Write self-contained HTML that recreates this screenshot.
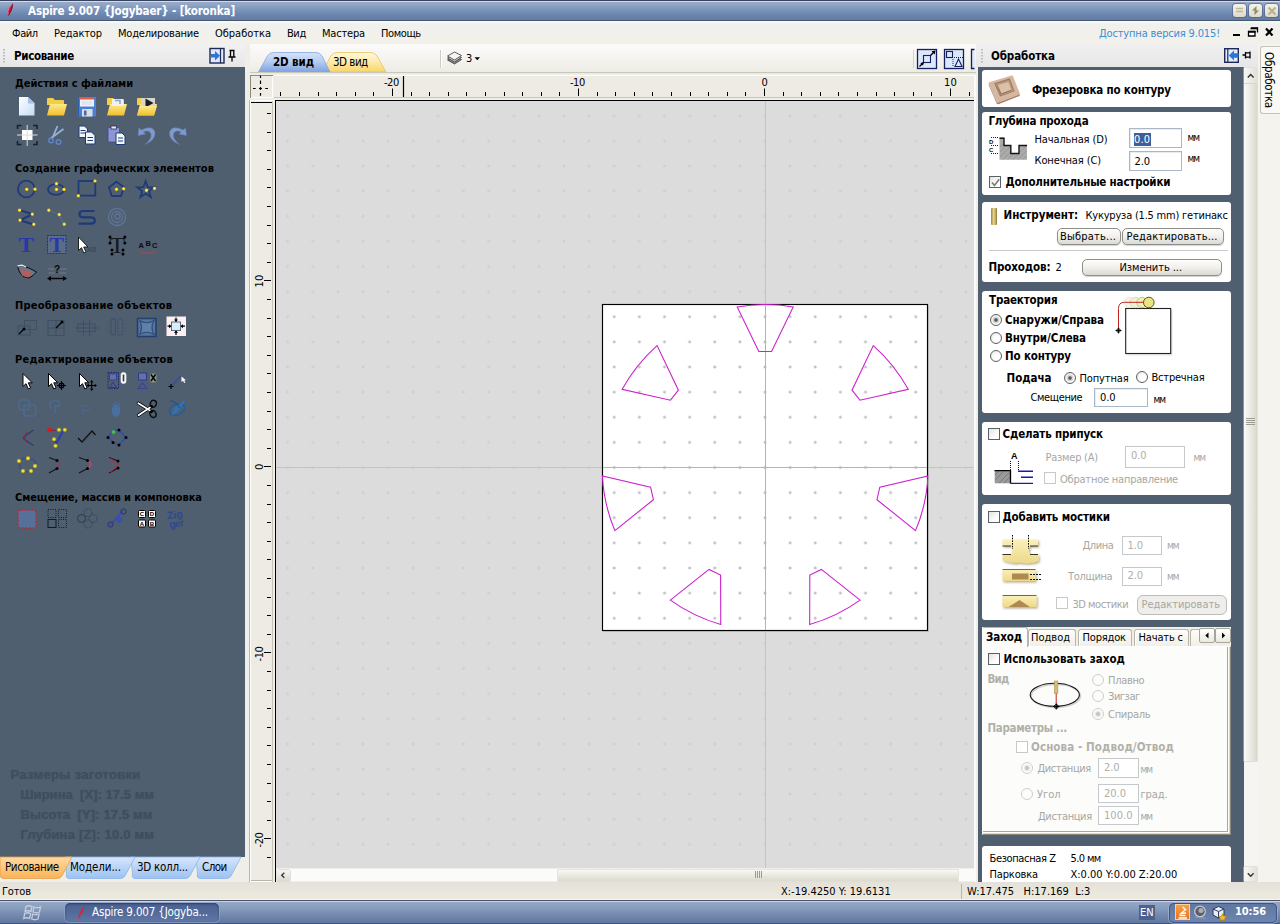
<!DOCTYPE html>
<html lang="ru"><head><meta charset="utf-8"><title>Aspire 9.007 {Jogybaer} - [koronka]</title>
<style>
html,body{margin:0;padding:0;background:#ece9d8;}
body{width:1280px;height:924px;overflow:hidden;font-family:"DejaVu Sans Condensed","Liberation Sans",sans-serif;font-size:11px;color:#000;}
#scr{position:relative;width:1280px;height:924px;overflow:hidden;background:#efeee8;}
.a{position:absolute;}
.t{position:absolute;white-space:nowrap;line-height:14px;height:14px;}
.b{font-weight:bold;}
svg{position:absolute;overflow:visible;}
/* title */
#title{left:0;top:0;width:1280px;height:21px;background:linear-gradient(#36425e 0,#36425e 1px,#ccdcf8 1px,#ccdcf8 2px,#9aaac8 2px,#90a4c5 5px,#7a94ba 10px,#6a84b0 15px,#667fa8 18px,#677b9c 20px,#46566c 20px,#46566c 21px);}
#title .t{color:#fff;font-size:12px;font-weight:bold;}
.tb{position:absolute;top:4px;width:13px;height:13px;border-radius:3px;background:linear-gradient(#f4f2ea,#dedacb);box-shadow:0 0 0 1px rgba(70,90,130,.55);}
/* menu */
#menu{left:0;top:21px;width:1280px;height:23px;background:linear-gradient(#f7fbfd 0,#f5f8fa 1px,#f0f1ee 3px,#f3f0e9 100%);}
/* left panel */
#lhead{left:0;top:44px;width:245px;height:23px;background:linear-gradient(#f2f2f2,#e6e6e6);}
#lbody{left:0;top:67px;width:245px;height:790px;background:#4f5f6f;}
#lbody .h{font-weight:bold;color:#000;font-size:11px;}
.emb{color:#3f4d5d;font-weight:bold;font-size:13px;font-family:"Liberation Sans",sans-serif;text-shadow:0 0 1px rgba(63,77,93,.6);}
/* status + taskbar */
#status{left:0;top:882px;width:1280px;height:18px;background:linear-gradient(#e3e1d9,#ebe8de 70%,#ebe8de 94%,#f6f6f8 95%);}
#task{left:0;top:900px;width:1280px;height:24px;background:linear-gradient(#4a5068 0,#4a5068 1px,#c8d4f0 1px,#c8d4f0 1.500px,#96a6c6 2px,#89a1bd 7px,#7d91b7 12px,#6e82a8 18px,#61789f 23px,#3f5482 23px,#3f5482 24px);}
/* right panel */
#rhead{left:976px;top:44px;width:282px;height:23px;background:linear-gradient(#f0f0f0,#e7e7e7);}
#rbody{left:978px;top:67px;width:266px;height:815px;background:#4f5f6f;overflow:hidden;}
.bx{position:absolute;left:4px;width:249px;background:#fff;border-radius:3px;}
.in{position:absolute;box-sizing:border-box;background:#fff;border:1px solid #a9b7c6;box-shadow:inset 1px 1px 0 #e8ecf0;}
.in span{position:absolute;left:5px;top:3px;font-size:11px;line-height:14px;white-space:nowrap;}
.btn{position:absolute;box-sizing:border-box;border:1px solid #8e8f8a;border-radius:5px;background:linear-gradient(#fdfdfc,#f1f0ec 50%,#dcdad2);box-shadow:0 1px 1px rgba(0,0,0,.18);}
.btn.dis{border-color:#c4c3bd;background:#efeee9;box-shadow:none;}
.cb{position:absolute;width:12px;height:12px;box-sizing:border-box;border:1px solid #5a6068;background:linear-gradient(135deg,#e4e3dc,#fff 70%);}
.cb.dis{border-color:#c9c9c4;background:#fff;}
.rd{position:absolute;width:12px;height:12px;box-sizing:border-box;border:1px solid #5e6064;border-radius:50%;background:radial-gradient(circle at 60% 60%,#fff 30%,#e2e1da);}
.rd.on::after{content:"";position:absolute;left:3px;top:3px;width:4px;height:4px;border-radius:50%;background:radial-gradient(#4a4a4a,#8a8a8a);box-shadow:0 0 0 1.500px #d8d8d4;}
.rd.dis{border-color:#cfcfca;background:#fdfdfc;}
.rd.dis.on::after{background:#c4c4c0;box-shadow:0 0 0 1.500px #ecece8;}
.g{color:#a7a7a2;}
.gb{color:#b1b1a9;font-weight:bold;}
.in.dis{border-color:#c6c9cc;box-shadow:none;}
.in.dis span{color:#aeaeaa;}

</style></head>
<body>
<div id="scr">
<!-- title bar -->
<div class="a" id="title">
<svg style="left:0;top:0" width="20" height="20" viewBox="0 0 20 20"><path d="M8.300 16Q6 11.200 9.300 7Q11.500 4.500 12.900 2.800Q13.400 7 11.600 10.800Q10.200 13.600 8.300 16Z" fill="#b41e3c"></path><path d="M8.100 14.500Q6.800 11 9.500 7.300Q11 5.300 12.300 3.800" stroke="#e88aa4" stroke-width="1" fill="none"></path><path d="M12.600 4.500Q12.400 9 8.600 15.200" stroke="#6a1428" stroke-width=".8" fill="none"></path></svg>
<span class="t" style="left: 28px; top: 4px; font-size: 11.5px; letter-spacing: -0.13px;">Aspire 9.007 {Jogybaer} - [koronka]</span>
<div class="tb" style="left:1233px"><svg style="left:3px;top:4px" width="7" height="5"><path d="M0 .5H7M0 3.5H7" stroke="#c2b98e" stroke-width="1.6"></path></svg></div>
<div class="tb" style="left:1249px"><svg style="left:2px;top:2px" width="9" height="9"><path d="M5.5 0L5.5 4.5L1 4.5ZM3.5 9L3.5 4.5L8 4.5Z" fill="#8f8a68"></path></svg></div>
<div class="tb" style="left:1265px"><svg style="left:2.5px;top:2.5px" width="8" height="8"><path d="M.5 .5L7.5 7.5M7.5 .5L.5 7.5" stroke="#b9b18c" stroke-width="2"></path></svg></div>
</div>
<!-- menu bar -->
<div class="a" id="menu">
<span class="t" style="left: 12px; top: 6px; letter-spacing: -0.38px;">Файл</span>
<span class="t" style="left: 54px; top: 6px; letter-spacing: -0.14px;">Редактор</span>
<span class="t" style="left: 118px; top: 6px; letter-spacing: -0.2px;">Моделирование</span>
<span class="t" style="left: 215px; top: 6px; letter-spacing: -0.02px;">Обработка</span>
<span class="t" style="left: 287px; top: 6px; letter-spacing: -0.42px;">Вид</span>
<span class="t" style="left: 322px; top: 6px; letter-spacing: -0.19px;">Мастера</span>
<span class="t" style="left: 381px; top: 6px; letter-spacing: -0.4px;">Помощь</span>
<span class="t" style="left: 1099px; top: 6px; color: rgb(60, 143, 210); letter-spacing: -0.16px;">Доступна версия 9.015!</span>
<svg style="left:1233px;top:6px" width="42" height="14"><path d="M0 8H7" stroke="#000" stroke-width="2"></path><path d="M18 1H24.500V5.500" stroke="#000" stroke-width="1.300" fill="none"></path><path d="M17.500 1.500H25" stroke="#000" stroke-width="1.600"></path><path d="M15.500 4.500H22V9H15.500Z" stroke="#000" stroke-width="1.300" fill="#fff"></path><path d="M15 4.800H22.500" stroke="#000" stroke-width="1.800"></path><path d="M33 1.500L39.500 8.500M39.500 1.500L33 8.500" stroke="#000" stroke-width="2.200"></path></svg>
</div>
<!-- left panel header -->
<div class="a" id="lhead">
<svg style="left:3px;top:4px" width="4" height="16"><path d="M1 1V15" stroke="#b9b9b9" stroke-width="2" stroke-dasharray="1.5 1.5"></path></svg>
<span class="t b" style="left: 14px; top: 5px; font-size: 11.5px; letter-spacing: -0.35px;">Рисование</span>
<svg style="left:209px;top:4px" width="30" height="16"><rect x="1" y=".5" width="14" height="14.5" fill="#dfe9f8" stroke="#1c2a55" stroke-width="1.4"></rect><path d="M11.5 1V15" stroke="#1c2a55" stroke-width="1.2"></path><path d="M2 6H6V3L11 7.7L6 12.5V9.5H2Z" fill="#2f74d6"></path><path d="M20.5 2.5H25.5M21.5 2.5V9M24.8 2.5V9M19.5 9H26.5M23 9V13.5" stroke="#000" stroke-width="1.3" fill="none"></path></svg>
</div>
<!-- left panel body -->
<div class="a" id="lbody">
<span class="t h" style="left: 15px; top: 9.5px; letter-spacing: -0.04px;">Действия с файлами</span>
<span class="t h" style="left: 15px; top: 94.5px; letter-spacing: 0.06px;">Создание графических элементов</span>
<span class="t h" style="left: 15px; top: 232px; letter-spacing: 0.21px;">Преобразование объектов</span>
<span class="t h" style="left: 15px; top: 286px; letter-spacing: 0.26px;">Редактирование объектов</span>
<span class="t h" style="left: 15px; top: 424px; letter-spacing: -0.09px;">Смещение, массив и компоновка</span>
<span class="t emb" style="left: 10.5px; top: 700.5px; letter-spacing: 0.33px;">Размеры заготовки</span>
<span class="t emb" style="left: 20.5px; top: 720.5px; letter-spacing: 0.04px;">Ширина&nbsp; [X]: 17.5 мм</span>
<span class="t emb" style="left: 20.5px; top: 740.5px; letter-spacing: 0.12px;">Высота&nbsp; [Y]: 17.5 мм</span>
<span class="t emb" style="left: 20.5px; top: 760.5px; letter-spacing: 0.21px;">Глубина [Z]: 10.0 мм</span>
</div>
<!-- left bottom tabs -->
<div class="a" id="ltabs" style="left:0;top:857px;width:245px;height:25px;background:#efeee8">
<svg style="left:0;top:0" width="245" height="22">
<defs><linearGradient id="gOr" x1="0" y1="0" x2="0" y2="1"><stop offset="0" stop-color="#ffd9a0"></stop><stop offset="1" stop-color="#f9b45a"></stop></linearGradient>
<linearGradient id="gBl" x1="0" y1="0" x2="0" y2="1"><stop offset="0" stop-color="#d6e6fc"></stop><stop offset="1" stop-color="#9cc2f2"></stop></linearGradient></defs>
<path d="M196 0H241L231 19Q229.500 21.500 226 21.500H201Q196 21.500 197.500 17Z" fill="url(#gBl)" stroke="#8eb4e6" stroke-width=".8"></path>
<path d="M131 0H200L190 19Q188.500 21.500 185 21.500H136Q131 21.500 132.500 17Z" fill="url(#gBl)" stroke="#8eb4e6" stroke-width=".8"></path>
<path d="M65 0H135L125 19Q123.500 21.500 120 21.500H70Q65 21.500 66.500 17Z" fill="url(#gBl)" stroke="#8eb4e6" stroke-width=".8"></path>
<path d="M0 0H72L62 19Q60.500 21.500 57 21.500H4Q0 21.500 0 18Z" fill="url(#gOr)" stroke="#e8a04a" stroke-width=".8"></path>
</svg>
<span class="t" style="left: 5px; top: 3px; font-size: 11.5px; letter-spacing: -0.39px;">Рисование</span>
<span class="t" style="left: 70px; top: 3px; font-size: 11.5px; letter-spacing: -0.12px;">Модели...</span>
<span class="t" style="left: 137px; top: 3px; font-size: 11.5px; letter-spacing: -0.26px;">3D колл...</span>
<span class="t" style="left: 202px; top: 3px; font-size: 11.5px; letter-spacing: -0.54px;">Слои</span>
</div>
<!-- status bar -->
<div class="a" id="status">
<span class="t" style="left: 2px; top: 3px; letter-spacing: -0.17px;">Готов</span>
<span class="t" style="left: 781px; top: 3px;">X:-19.4250 Y: 19.6131</span>
<div class="a" style="left:961px;top:2px;width:1px;height:15px;background:#b9b6a8"></div>
<span class="t" style="left: 967px; top: 3px; white-space: pre;">W:17.475   H:17.169  L:3</span>
</div>
<!-- left panel icons: file actions -->
<svg style="left:0;top:0" width="245" height="300" viewBox="0 0 245 300">
<defs>
<linearGradient id="gDoc" x1="0" y1="0" x2="1" y2="1"><stop offset="0" stop-color="#ffffff"></stop><stop offset="1" stop-color="#c4dcf8"></stop></linearGradient>
<linearGradient id="gFo" x1="0" y1="0" x2="0" y2="1"><stop offset="0" stop-color="#ffe98a"></stop><stop offset="1" stop-color="#f0c02c"></stop></linearGradient>
<radialGradient id="gYd"><stop offset="0" stop-color="#fff8b0"></stop><stop offset=".55" stop-color="#f4d21e"></stop><stop offset="1" stop-color="#a88a20" stop-opacity=".3"></stop></radialGradient>
<g id="fold"><path d="M0 2Q0 1 1 1H6L8 3H16Q17 3 17 4V8H0Z" fill="#f1cf4a"></path><path d="M0 18.500L3 7H20L17 18.500Z" fill="url(#gFo)"></path></g>
<circle id="yd" r="2.100" fill="url(#gYd)"></circle>
</defs>
<!-- new -->
<path d="M19 97H28L34.500 103V115.500H19Z" fill="url(#gDoc)"></path><path d="M28 97V103.500H34.500Z" fill="#9fc0ea"></path>
<!-- open -->
<use href="#fold" x="47" y="97"></use>
<!-- save -->
<rect x="77.500" y="97" width="18.500" height="19.500" fill="#4c80d2"></rect><rect x="77.500" y="97" width="1.500" height="19.500" fill="#2f5cae"></rect><rect x="80" y="97" width="14" height="9.500" fill="#f1f4fa"></rect><rect x="80" y="97" width="14" height="2.500" fill="#e2594a"></rect><path d="M81.500 102H92.500M81.500 104H92.500" stroke="#c9d2e4" stroke-width=".8"></path><rect x="82" y="109" width="10.500" height="7.500" fill="#d9dee8"></rect><rect x="84" y="110.500" width="2.500" height="5" fill="#4a68a8"></rect>
<!-- open special -->
<use href="#fold" x="107" y="97"></use><rect x="112" y="99" width="11.500" height="7" fill="#f2f1ea"></rect><path d="M115 100.500H120V104" stroke="#8aa2d2" stroke-width="1.500" fill="none"></path>
<use href="#fold" x="137" y="97"></use><rect x="141" y="98" width="14" height="8" fill="#d8d6c8"></rect><path d="M145.500 98.500L153.500 103L145.500 107.500Z" fill="#1c1c28"></path><path d="M137 115.500L140 106H157L154 115.500Z" fill="url(#gFo)"></path>
<!-- zoom extents -->
<rect x="22" y="130" width="10.500" height="10" fill="#fff"></rect><path d="M17 135H37.500M27.200 125V146" stroke="#dcdcdc" stroke-width="1"></path><path d="M17.500 129V125.500H21.500M33 125.500H37V129M37 141V144.500H33M21.500 144.500H17.500V141" stroke="#18222c" stroke-width="1.600" fill="none"></path>
<!-- cut -->
<path d="M57.500 126L52 139M63.500 129L50.500 138.500" stroke="#98b0dc" stroke-width="1.800"></path><circle cx="51" cy="140.500" r="2.300" fill="none" stroke="#5f84c8" stroke-width="1.400"></circle><circle cx="58.500" cy="142" r="2.300" fill="none" stroke="#5f84c8" stroke-width="1.400"></circle>
<!-- copy -->
<path d="M79 126H84.500L87.500 129V137.500H79Z" fill="#eef5ff" stroke="#1f3c72" stroke-width="1"></path><path d="M80.500 130.500H85.500M80.500 133H85.500" stroke="#1f3c72" stroke-width="1"></path><path d="M85.500 132H91.500L95 135.500V144H85.500Z" fill="#eef5ff" stroke="#1f3c72" stroke-width="1"></path><path d="M87.500 137.500H93M87.500 140.500H93" stroke="#1f3c72" stroke-width="1.200"></path>
<!-- paste -->
<rect x="108" y="127.500" width="11.500" height="14.500" rx="1" fill="#8d95d2" stroke="#3c4690" stroke-width=".8"></rect><rect x="111" y="126" width="5.500" height="3" fill="#e4e6f2" stroke="#2a2f60" stroke-width=".8"></rect><path d="M116 133H122L125 136V144.500H116Z" fill="#f4f8ff" stroke="#1f3c72" stroke-width="1"></path><path d="M118 138H123M118 141H123" stroke="#1f3c72" stroke-width="1.200"></path>
<!-- undo / redo -->
<path d="M139 128L138 135.500L145.500 134L143.300 132Q149 129 151 134Q152 139 145 144.500Q156 140 155 132Q152.500 124.500 141.300 130Z" fill="#7f9bcb" stroke="#5f7eb4" stroke-width=".6"></path>
<path d="M185.500 128L186.500 135.500L179 134L181.200 132Q175.500 129 173.500 134Q172.500 139 179.500 144.500Q168.500 140 169.500 132Q172 124.500 183.200 130Z" fill="#7f9bcb" stroke="#5f7eb4" stroke-width=".6"></path>
<!-- create: circle, ellipse, rect, polygon, star -->
<g fill="none" stroke="#1f3a7a" stroke-width="1.800">
<circle cx="26.300" cy="189" r="8.300"></circle><ellipse cx="56" cy="189.500" rx="8" ry="5.400"></ellipse><rect x="78.500" y="181" width="16.800" height="14.600"></rect>
<path d="M116.500 181.700L124 187.300L121 196H111.800L109 187.300Z"></path><path d="M145.6 181.2L147.7 187.1L154.0 187.3L149.0 191.1L150.8 197.1L145.6 193.6L140.4 197.1L142.2 191.1L137.2 187.3L143.5 187.1Z"></path>
<path d="M19.500 210L32.500 214.200L20 220.200L33.800 224.500" stroke-width="2.200"></path><path d="M94.500 211H83Q79.500 211 79.500 214Q79.500 217.300 83 217.300H91Q94.800 217.300 94.800 220.500Q94.800 223.700 91 223.700H78.500" stroke-width="2.200"></path>
</g>
<path d="M48.800 210L59 214.600L64 224" stroke="#5b6d8a" stroke-width="1" fill="none"></path>
<g fill="none" stroke="#5d7596" stroke-width="1.300"><circle cx="117" cy="217" r="8.500"></circle><circle cx="117" cy="217" r="5.500"></circle><circle cx="117.500" cy="216.500" r="2.500"></circle></g>
<use href="#yd" x="26.800" y="189.300"></use><use href="#yd" x="35" y="189.200"></use>
<use href="#yd" x="56.500" y="183.700"></use><use href="#yd" x="56.500" y="189.400"></use><use href="#yd" x="64" y="189.400"></use>
<use href="#yd" x="95" y="181"></use><use href="#yd" x="78.300" y="195.800"></use>
<use href="#yd" x="116.500" y="189.300"></use><use href="#yd" x="123.700" y="188.800"></use>
<use href="#yd" x="146.500" y="190.300"></use><use href="#yd" x="154.500" y="188.400"></use>
<use href="#yd" x="19.600" y="210.200"></use><use href="#yd" x="32.300" y="214.200"></use><use href="#yd" x="20" y="220.200"></use><use href="#yd" x="33.800" y="224.300"></use>
<use href="#yd" x="48.800" y="210.200"></use><use href="#yd" x="59.200" y="214.600"></use><use href="#yd" x="64.200" y="224.200"></use>
</svg>
<!-- left panel icons: text, transform, edit, offset -->
<svg style="left:0;top:230px" width="245" height="310" viewBox="0 230 245 310">
<defs>
<g id="cur"><path d="M0 0V13L3 10.200L5.300 15.500L7.600 14.500L5.300 9.300H9.300Z" fill="#fff" stroke="#000" stroke-width="1"></path></g>
<circle id="bd" r="1.500" fill="#000"></circle>
</defs>
<!-- text T -->
<text x="18.500" y="252" font-family="Liberation Serif,serif" font-weight="bold" font-size="22" fill="#2b37a6" textLength="15.500" lengthAdjust="spacingAndGlyphs">T</text>
<rect x="47.500" y="235.500" width="18.500" height="18" fill="#5a6c88" stroke="#1e2c9a" stroke-width="1" stroke-dasharray="2 1"></rect>
<text x="49.500" y="252" font-family="Liberation Serif,serif" font-weight="bold" font-size="22" fill="#2b37a6" textLength="14.500" lengthAdjust="spacingAndGlyphs">T</text>
<path d="M78.500 237V250.500L81.500 247.700L83.800 253L86 252L83.700 247H88Z" fill="#fff" stroke="#111" stroke-width=".9"></path>
<text x="87" y="251.500" font-family="Liberation Sans,sans-serif" font-size="6.500" fill="#33425e" textLength="9.500" lengthAdjust="spacingAndGlyphs">AB</text>
<text x="109.500" y="253" font-family="Liberation Serif,serif" font-size="23" fill="#16181c" textLength="15.500" lengthAdjust="spacingAndGlyphs">T</text>
<use href="#bd" x="110" y="237"></use><use href="#bd" x="124.800" y="237"></use><use href="#bd" x="110" y="243"></use><use href="#bd" x="124.800" y="243"></use><use href="#bd" x="112" y="250"></use><use href="#bd" x="123" y="250"></use><use href="#bd" x="112" y="254"></use><use href="#bd" x="123" y="254"></use>
<path d="M138 250.500Q147 256 157 250.500" stroke="#8c4f58" stroke-width="2.200" fill="none" opacity=".75"></path>
<text font-family="Liberation Sans,sans-serif" font-weight="bold" font-size="7.500" fill="#0c0c10"><tspan x="138.500" y="247.800">A</tspan><tspan x="145.500" y="246">B</tspan><tspan x="152" y="247.500">C</tspan></text>
<!-- bird / sculpt -->
<path d="M17.500 266.500L22 265.500L30 268.500L36.500 272L33 275.500L29 278L23 276.500L19.500 272Z" fill="#6b7686" stroke="#0b0b0b" stroke-width="1"></path><path d="M20.500 270L30 271L32 275L27.500 277.500L22 275.500Z" fill="#b0605c"></path><path d="M17.500 266L22 265.200L26 267" stroke="#e8e8e8" stroke-width="1.300" fill="none"></path>
<!-- ? measure -->
<path d="M47.500 269H54M60 269H67M48.500 273H55M59 273H66" stroke="#6d7c8f" stroke-width="1"></path><text x="54" y="273" font-family="Liberation Sans,sans-serif" font-weight="bold" font-size="10" fill="#0a0a0a">?</text><path d="M49 278.500H65" stroke="#000" stroke-width="1.400"></path><path d="M47 278.500L51 276V281ZM67 278.500L63 276V281Z" fill="#000"></path>
<!-- transform row -->
<g fill="none" stroke="#3f4f66" stroke-width="1"><rect x="24.500" y="320.500" width="12" height="9"></rect><rect x="18" y="326" width="12" height="9"></rect>
<rect x="48" y="320.500" width="16" height="15"></rect><path d="M48 328H64M56 320.500V335.500"></path>
<rect x="78" y="324" width="17" height="7.500"></rect><path d="M83.500 320V336M89.500 320V336M75 328H98"></path>
<rect x="111" y="319" width="4.500" height="16" rx="1"></rect><rect x="118" y="319" width="4.500" height="16" rx="1" stroke-dasharray="2 1.500"></rect><circle cx="116" cy="327" r="9" stroke="#485970" stroke-width=".8"></circle></g>
<path d="M19 334L24 329" stroke="#000" stroke-width="1.300"></path><circle cx="24" cy="329" r="1.500" fill="#000"></circle>
<path d="M56 328L62 322" stroke="#000" stroke-width="1.300"></path><circle cx="62" cy="322" r="1.600" fill="#000"></circle>
<rect x="137.500" y="318.500" width="18.500" height="18" fill="#58769a" stroke="#23406f" stroke-width="1.600"></rect><path d="M139.500 320.500Q146.500 325 154 320.500Q150 327.500 154 334.500Q146.500 330 139.500 334.500Q143.500 327.500 139.500 320.500Z" fill="#5f81a6" stroke="#2c4d80" stroke-width="1.200"></path>
<rect x="166.500" y="316.500" width="19.500" height="19.500" fill="#fdeef2"></rect><rect x="171.500" y="322" width="9" height="8.500" fill="#d6ecf8" stroke="#5d6d78" stroke-width="1"></rect>
<path d="M176 317.500V321.500M176 331V335M167.500 326.200H171M181 326.200H185" stroke="#000" stroke-width="1.200"></path><path d="M176 322L174 319.500H178ZM176 330.500L174 333H178ZM171.500 326.200L169 324.200V328.200ZM180.500 326.200L183 324.200V328.200Z" fill="#000"></path>
<!-- edit row 1 -->
<use href="#cur" x="23" y="373.500"></use>
<use href="#cur" x="48.500" y="373.500"></use><circle cx="61.500" cy="385.500" r="2.300" fill="none" stroke="#000" stroke-width="1.300"></circle><path d="M57 385.500H66M61.500 381V390" stroke="#000" stroke-width="1.100"></path>
<use href="#cur" x="79.500" y="373.500"></use><path d="M87.500 385.500H96M91.700 381V390" stroke="#000" stroke-width="1.100"></path><path d="M91.700 380L90 382.300H93.400ZM91.700 391L90 388.700H93.400ZM86.500 385.500L88.800 383.800V387.200ZM97 385.500L94.700 383.800V387.200Z" fill="#000"></path>
<rect x="108" y="372.500" width="10.500" height="16" fill="none" stroke="#1c2478" stroke-width="1" stroke-dasharray="1.500 1.200"></rect><rect x="109.500" y="374" width="7" height="6" fill="#6670a8" stroke="#2e3a8c" stroke-width=".8"></rect><path d="M113 382L116.500 387.500H109.500Z" fill="none" stroke="#2e3a8c" stroke-width="1"></path>
<rect x="121" y="372.500" width="5" height="11" rx="2.300" fill="#f6f6f6" stroke="#fff" stroke-width=".6"></rect><rect x="122.700" y="374.500" width="1.600" height="7" rx=".8" fill="#3a3a3a"></rect>
<rect x="138.500" y="373" width="8" height="7" fill="#6670a8" stroke="#2e3a8c" stroke-width="1"></rect><path d="M142.500 383L147 388.500H138Z" fill="none" stroke="#39459a" stroke-width="1.200"></path>
<rect x="150" y="373.500" width="6.500" height="9" rx="2" fill="#8d9582"></rect><path d="M151 374.500L155.500 381M155.500 374.500L151 381" stroke="#000" stroke-width="1.400"></path>
<path d="M172 385.500L181 375.500" stroke="#3b4ca0" stroke-width="1.600"></path><path d="M168.500 386.500H173.500M171 384V389" stroke="#000" stroke-width="1.200"></path><path d="M181.500 376.500V382L183 380.700L184.300 383L185.300 382.400L184.200 380.200H186Z" fill="#fff"></path>
<!-- edit row 2 faint -->
<g fill="none" stroke="#4d698f" stroke-width="1.600"><rect x="19" y="400" width="10.500" height="10" rx="3"></rect><rect x="24" y="405" width="11.500" height="11" rx="2"></rect>
<path d="M51 409Q47.500 402 54 400.500Q60.500 400 59.500 406H55V413"></path>
<path d="M82.500 415V406H88Q90.500 408 88 410.500H83" stroke-width="1.200" opacity=".7"></path>
<ellipse cx="116" cy="410.500" rx="3.500" ry="5.500" fill="#4a6fa2" stroke="#4a6fa2"></ellipse><ellipse cx="116.500" cy="404.500" rx="3" ry="2.500" stroke-width="1.200"></ellipse></g>
<!-- scissors bw -->
<path d="M138.300 403.200L151.500 411.500M138.500 415.200L151.500 406.500" stroke="#000" stroke-width="3.200" stroke-linecap="round"></path><path d="M138.300 403.200L150 410.500M138.500 415.200L150 407.500" stroke="#fff" stroke-width="1.700" stroke-linecap="round"></path>
<ellipse cx="153.300" cy="403.800" rx="3" ry="3.500" fill="none" stroke="#0a0a0a" stroke-width="1.400" transform="rotate(20 153.300 403.800)"></ellipse><ellipse cx="153" cy="414" rx="3" ry="3.500" fill="none" stroke="#0a0a0a" stroke-width="1.400" transform="rotate(-20 153 414)"></ellipse>
<!-- pen ellipse -->
<ellipse cx="177" cy="409.500" rx="8" ry="5.500" fill="none" stroke="#1f5e9c" stroke-width="1.300" transform="rotate(-25 177 409.500)"></ellipse><path d="M171.500 416L174 408L183.500 400.500L185 402L177.500 412Z" fill="#2d72b4"></path><path d="M170 401Q176 401 180 408" stroke="#1c4f88" stroke-width="1" fill="none"></path>
<!-- edit row 3 -->
<path d="M33.500 430L24.500 436.500Q23 438 24.500 439.500L33.500 445.500" fill="none" stroke="#2c3f72" stroke-width="1.500"></path><path d="M27 432.500Q22.500 437.500 27 442.500" fill="none" stroke="#8a2a44" stroke-width="1.300"></path>
<path d="M48 430L56 430.500" stroke="#8a2030" stroke-width="1"></path><path d="M63.500 430.500L56.500 443L52.500 439" stroke="#2b3fae" stroke-width="2" fill="none"></path><circle cx="49.500" cy="430" r="2.300" fill="#d81820"></circle>
<g fill="#efe23a" stroke="#8a8420" stroke-width=".6"><circle cx="59" cy="429.800" r="1.900"></circle><circle cx="64.800" cy="429.800" r="1.900"></circle><circle cx="54" cy="439.200" r="1.900"></circle><circle cx="55.500" cy="445.800" r="1.900"></circle></g>
<path d="M78 439L82.500 443.500L94 432" stroke="#a03040" stroke-width="1" fill="none"></path><path d="M78 438L82 442L92 431L95.500 435" stroke="#0c0c0c" stroke-width="1.200" fill="none"></path>
<path d="M108 437.500L113 430.500L119 430L126 437.500L119 445L113 442.500Z" fill="none" stroke="#2b4bb0" stroke-width="1.300"></path><circle cx="113.500" cy="432" r="2" fill="#40c040"></circle>
<use href="#bd" x="119" y="430"></use><use href="#bd" x="126" y="437.500"></use><use href="#bd" x="119" y="445"></use><use href="#bd" x="113" y="442.500"></use><use href="#bd" x="108" y="437.500"></use>
<!-- edit row 4 -->
<path d="M19 460.500Q27 455 35 461Q38 466 31 470.500Q24 474 20 468Z" fill="none" stroke="#38508c" stroke-width="1.500"></path>
<g fill="#f2e23c" stroke="#8a7a20" stroke-width=".6"><circle cx="19" cy="461" r="2"></circle><circle cx="28" cy="458.300" r="2"></circle><circle cx="35" cy="466" r="2"></circle><circle cx="31" cy="471" r="2"></circle><circle cx="23" cy="471" r="2"></circle></g>
<g fill="none" stroke-width="1.200"><path d="M49 457.500L57 460.500M49 473L57 468.500" stroke="#10161e"></path><path d="M57 460.500Q60.500 464.500 57 468.500" stroke="#8a4454"></path>
<path d="M79 457.500L87.500 460.500M79 473L87.500 468.500" stroke="#10161e"></path><path d="M87.500 460.500Q94 464.500 87.500 468.500" stroke="#b04a60" stroke-width="2"></path>
<path d="M109 457.500L118 461M109 473L118 468" stroke="#10161e"></path><path d="M110 458.500L118.500 464.500L110 472" stroke="#b03448" stroke-width="1.100"></path></g>
<use href="#bd" x="57" y="460.500"></use><use href="#bd" x="57" y="468.500"></use><use href="#bd" x="87.500" y="460.500"></use><use href="#bd" x="87.500" y="468.500"></use><use href="#bd" x="118" y="461"></use><use href="#bd" x="118" y="468"></use>
<!-- offset row -->
<rect x="18" y="510" width="18" height="18" rx="2.500" fill="#55719a" stroke="#c02834" stroke-width="1.400" stroke-dasharray="2.200 1.400"></rect>
<g fill="none" stroke="#101a26" stroke-width="1"><rect x="48" y="519.500" width="8" height="8"></rect><rect x="48" y="509.500" width="8" height="8" stroke-dasharray="1 1.300"></rect><rect x="58.500" y="509.500" width="8" height="8" stroke-dasharray="1 1.300"></rect><rect x="58.500" y="519.500" width="8" height="8" stroke-dasharray="1 1.300"></rect></g>
<g fill="none" stroke="#2c3a4c" stroke-width="1"><circle cx="81.500" cy="518.500" r="4"></circle><circle cx="88" cy="512.500" r="4" stroke-dasharray="1 1.200"></circle><circle cx="93" cy="518.500" r="4" stroke-dasharray="1 1.200"></circle><circle cx="88" cy="524" r="4" stroke-dasharray="1 1.200"></circle></g>
<path d="M110 525L123 511" stroke="#3d4cb0" stroke-width="2"></path><g fill="none" stroke="#26346e" stroke-width="1"><circle cx="110.500" cy="524.500" r="2.600"></circle><circle cx="123.500" cy="511.500" r="2.600"></circle></g><circle cx="119.500" cy="520" r="2.800" fill="#3d4cb0"></circle>
<g stroke="#000" stroke-width="1" fill="#fff"><rect x="138.500" y="510.500" width="7" height="7" rx="1"></rect><rect x="148.500" y="510.500" width="7" height="7" rx="1"></rect><rect x="138.500" y="520" width="7" height="7" rx="1"></rect><rect x="148.500" y="520" width="7" height="7" rx="1"></rect></g>
<text font-family="Liberation Sans,sans-serif" font-weight="bold" font-size="6" fill="#000"><tspan x="139.800" y="516.300">C</tspan><tspan x="149.800" y="516.300">D</tspan><tspan x="139.800" y="525.800">A</tspan><tspan x="149.800" y="525.800">B</tspan></text>
<text font-family="Liberation Sans,sans-serif" font-weight="bold" font-size="10.500" fill="#2f4a8c" transform="rotate(-8 177 519)"><tspan x="167.500" y="518">Zig</tspan><tspan x="168.500" y="527" textLength="15">ger</tspan></text>
</svg>
<!-- centre: view tabs, toolbar -->
<div class="a" style="left:245px;top:44px;width:733px;height:838px;background:#efeee8"></div>
<div class="a" style="left:250px;top:44px;width:726px;height:30px;background:linear-gradient(#fbfbfa,#f3f2ed 60%,#ebeae2)"></div>
<svg style="left:250px;top:44px" width="726" height="30" viewBox="250 44 726 30">
<defs><linearGradient id="g2d" x1="0" y1="0" x2="0" y2="1"><stop offset="0" stop-color="#d5e2f8"></stop><stop offset=".5" stop-color="#b4caf0"></stop><stop offset="1" stop-color="#7ea2e2"></stop></linearGradient>
<linearGradient id="g3d" x1="0" y1="0" x2="0" y2="1"><stop offset="0" stop-color="#fff8dc"></stop><stop offset=".5" stop-color="#fdeaa8"></stop><stop offset="1" stop-color="#fad468"></stop></linearGradient></defs>
<path d="M322 72L331 56Q333 52.500 337 52.500H371Q375 52.500 377 56L386 72Z" fill="url(#g3d)" stroke="#e9c15a" stroke-width=".8"></path>
<path d="M258.500 72L267.500 56Q269.500 52.500 273.500 52.500H316Q320 52.500 322 56L330 72Z" fill="url(#g2d)" stroke="#86a6de" stroke-width=".8"></path>
<path d="M250 72.500H976" stroke="#c9c7ba" stroke-width="1"></path>
<path d="M440.500 50V68" stroke="#cfcdc2" stroke-width="1"></path><path d="M441.500 50V68" stroke="#fff" stroke-width="1"></path>
<path d="M447.500 60L454.500 56L461.500 59.500L454.500 64Z" fill="#8a8a8a" stroke="#3a3a3a" stroke-width=".8"></path><path d="M447.500 58L454.500 54L461.500 57.500L454.500 62Z" fill="#c9c9c9" stroke="#3a3a3a" stroke-width=".8"></path><path d="M447.500 56L454.500 52L461.500 55.500L454.500 60Z" fill="#f4f4f4" stroke="#3a3a3a" stroke-width=".8"></path>
<path d="M474.500 57.200H480L477.250 60.200Z" fill="#000"></path>
<path d="M913.500 50V68" stroke="#d4d2c8" stroke-width="1"></path>
<rect x="917.500" y="49.500" width="19" height="19" fill="#dbe7fb" stroke="#15205e" stroke-width="1.300"></rect><rect x="923.500" y="55.500" width="7" height="7" fill="none" stroke="#15205e" stroke-width="1.100"></rect><path d="M919.500 66.500L923.500 62.500M930.500 55.500L934.500 51.500" stroke="#000" stroke-width="1.300"></path><path d="M935.500 50.500L931.500 51.300L934.700 54.500ZM923.800 62.200L920.300 63L923 65.700Z" fill="#000"></path>
<rect x="944.500" y="49.500" width="19" height="19" fill="#dbe7fb" stroke="#15205e" stroke-width="1.300"></rect><rect x="946.500" y="51.500" width="6" height="6" fill="none" stroke="#15205e" stroke-width="1.100"></rect><path d="M954 57.500H963M953 59V67" stroke="#15205e" stroke-width="1" stroke-dasharray="1 1"></path><path d="M958.500 59L962 66.500H955Z" fill="none" stroke="#15205e" stroke-width="1.100"></path>
<path d="M974.500 49.500H971.500V68.500H974.500" fill="#dbe7fb" stroke="#15205e" stroke-width="1.300"></path>
</svg>
<span class="t b" style="left: 273px; top: 55px; font-size: 11.5px; letter-spacing: -0.1px;">2D вид</span>
<span class="t" style="left: 333px; top: 55px; font-size: 11.5px; letter-spacing: -0.51px;">3D вид</span>
<span class="t" style="left: 466px; top: 52px;">3</span>
<!-- rulers -->
<div class="a" style="left:250px;top:75px;width:23px;height:23px;background:#edebe4;box-shadow:inset 1px 1px 0 #8f8b74,inset -1px -1px 0 #fdfdfb"></div>
<div class="a" style="left:274px;top:75px;width:700px;height:23px;background:#edebe4;box-shadow:inset 0 1px 0 #fdfdfb,inset 0 -1px 0 #c8c5b6"></div>
<div class="a" style="left:249px;top:100px;width:24px;height:782px;background:#edebe4;box-shadow:inset 1px 0 0 #b9b6a8,inset 2px 1px 0 #fdfdfb,inset -1px 0 0 #c8c5b6,inset 0 -1px 0 #fdfdfb,inset 0 -2px 0 #b9b6a8"></div>
<svg style="left:0;top:0" width="980" height="882" viewBox="0 0 980 882">
<path d="M253 88.500H255.700M259 88.500H262M265.200 88.500H268M260.500 75.500V78M260.500 80.500V84M260.500 87V90M260.500 93V95.700" stroke="#000" stroke-width="1.200" fill="none"></path>
<path d="M280.5 92V96M299.5 92V96M318.5 92V96M336.5 92V96M355.5 92V96M373.5 92V96M392.5 88.500V96M411.5 92V96M429.5 92V96M448.5 92V96M466.5 92V96M485.5 92V96M504.5 92V96M522.5 92V96M541.5 92V96M559.5 92V96M578.5 88.500V96M597.5 92V96M615.5 92V96M634.5 92V96M652.5 92V96M671.5 92V96M690.5 92V96M708.5 92V96M727.5 92V96M745.5 92V96M764.5 88.500V96M783.5 92V96M801.5 92V96M820.5 92V96M838.5 92V96M857.5 92V96M876.5 92V96M894.5 92V96M913.5 92V96M931.5 92V96M950.5 88.500V96M969.5 92V96" stroke="#000" stroke-width="1" fill="none"></path>
<path d="M267 857.5H271M264 838.5H271M267 820.5H271M267 801.5H271M267 783.5H271M267 764.5H271M267 745.5H271M267 727.5H271M267 708.5H271M267 690.5H271M267 671.5H271M264 652.5H271M267 634.5H271M267 615.5H271M267 597.5H271M267 578.5H271M267 559.5H271M267 541.5H271M267 522.5H271M267 504.5H271M267 485.5H271M264 466.5H271M267 448.5H271M267 429.5H271M267 411.5H271M267 392.5H271M267 373.5H271M267 355.5H271M267 336.5H271M267 318.5H271M267 299.5H271M264 280.5H271M267 262.5H271M267 243.5H271M267 225.5H271M267 206.5H271M267 187.5H271M267 169.5H271M267 150.5H271M267 132.5H271M267 113.5H271" stroke="#000" stroke-width="1" fill="none"></path>
<path d="M403.500 76V97M251 102.500H272" stroke="#000" stroke-width="1.200"></path>
</svg>
<span class="t" style="left: 384px; top: 75.5px; letter-spacing: -0.47px;">-20</span>
<span class="t" style="left: 570px; top: 75.5px; letter-spacing: -0.47px;">-10</span>
<span class="t" style="left: 761.5px; top: 75.5px;">0</span>
<span class="t" style="left: 944px; top: 75.5px; letter-spacing: 0.27px;">10</span>
<span class="t" style="left: 253px; top: 273.9px; width: 13px; text-align: center; transform: rotate(-90deg); letter-spacing: 0.27px;">10</span>
<span class="t" style="left: 256.5px; top: 459.9px; width: 6px; text-align: center; transform: rotate(-90deg);">0</span>
<span class="t" style="left: 252px; top: 646.9px; width: 15px; text-align: center; transform: rotate(-90deg); letter-spacing: -0.47px;">-10</span>
<span class="t" style="left: 252px; top: 832.9px; width: 15px; text-align: center; transform: rotate(-90deg); letter-spacing: -0.47px;">-20</span>
<!-- canvas -->
<div class="a" style="left:274.500px;top:99.500px;width:700px;height:1.600px;background:#000"></div>
<div class="a" style="left:274.500px;top:99.500px;width:1.600px;height:782px;background:#000"></div>
<div class="a" style="left:974px;top:75px;width:2px;height:807px;background:#fbfbf9"></div>
<div class="a" style="left:276px;top:101px;width:698px;height:767px;background:#dcdcdc"></div>
<svg style="left:276px;top:101px" width="698" height="767" viewBox="276 101 698 767">
<defs><pattern id="grd" x="249.92" y="78.05" width="25.126" height="25.126" patternUnits="userSpaceOnUse"><path d="M11.06 12.56H14.06M12.56 11.06V14.06" stroke="#000" stroke-width="1.100"></path></pattern></defs>
<rect x="276" y="101" width="698" height="767" fill="url(#grd)" opacity=".075"></rect>
<path d="M765.500 101V868M276 467.500H974" stroke="#c3c3c3" stroke-width="1"></path>
<rect x="603.500" y="305.500" width="325.500" height="326.500" fill="#c4c4c4"></rect>
<rect x="602.500" y="304.500" width="325" height="326" fill="#fff" stroke="#000" stroke-width="1.150"></rect>
<rect x="603" y="305" width="324" height="325" fill="url(#grd)" opacity=".32"></rect>
<path d="M765.500 305V630M603 467.500H927" stroke="#b4b4b4" stroke-width="1"></path>
<clipPath id="cj"><rect x="600" y="303.500" width="328.500" height="328"></rect></clipPath>
<g fill="none" stroke="#cc22cc" stroke-width="1.100" clip-path="url(#cj)"><path id="tooth" d="M737.2 307.0A163.0 163.0 0 0 1 793.2 307.0L771.6 351.5L758.8 351.5Z"></path>
<use href="#tooth" transform="rotate(51.429 765.2 467.6)"></use>
<use href="#tooth" transform="rotate(102.857 765.2 467.6)"></use>
<use href="#tooth" transform="rotate(154.286 765.2 467.6)"></use>
<use href="#tooth" transform="rotate(205.714 765.2 467.6)"></use>
<use href="#tooth" transform="rotate(257.143 765.2 467.6)"></use>
<use href="#tooth" transform="rotate(308.571 765.2 467.6)"></use>
</g></svg>
<!-- canvas horizontal scrollbar -->
<div class="a" style="left:276px;top:868px;width:698px;height:13px;background:#fbfbfa;box-shadow:inset 0 1px 0 #f0efe9"></div>
<div class="a" style="left:276.500px;top:869.500px;width:13px;height:11px;background:linear-gradient(#f6f5f1,#dddad0);border-radius:1px;box-shadow:0 0 0 .5px #c9c6ba"></div>
<svg style="left:280px;top:871px" width="8" height="9"><path d="M4.300 1.700L1.700 4.200L4.300 6.700" stroke="#333" stroke-width="1.300" fill="none"></path></svg>
<div class="a" style="left:558px;top:869.500px;width:399.500px;height:11.500px;background:linear-gradient(#f9f9f6,#ebeae3 45%,#dddbd0);box-shadow:0 0 0 .5px #cfccc0"></div>
<svg style="left:754px;top:870px" width="9" height="9"><path d="M1.500 1V8M3.500 1V8M5.500 1V8M7.500 1V8" stroke="#9c9a90" stroke-width="1"></path></svg>
<!-- right panel header -->
<div class="a" id="rhead">
<svg style="left:5px;top:4px" width="4" height="16"><path d="M1 1V15" stroke="#bdbdbd" stroke-width="2" stroke-dasharray="1.500 1.500"></path></svg>
<span class="t b" style="left: 15px; top: 5px; font-size: 11.5px; letter-spacing: -0.09px;">Обработка</span>
<svg style="left:248px;top:4px" width="30" height="16"><rect x=".700" y=".700" width="13.600" height="13.600" fill="#e4ecf8" stroke="#1c2a55" stroke-width="1.400"></rect><path d="M3.800 1V14.300" stroke="#1c2a55" stroke-width="1.200"></path><path d="M14.500 5.300H10V2.500L4.800 7.500L10 12.500V9.700H14.500Z" fill="#2f74d6"></path><path d="M18.500 7H21.500M21.500 4V10.500M21.500 4.800H26M21.500 9.200H26M26 3.500V10.500" stroke="#000" stroke-width="1.300" fill="none"></path></svg>
</div>
<!-- right side strip with vertical tab -->
<div class="a" style="left:1258px;top:44px;width:22px;height:838px;background:#f4f3ee"></div>
<div class="a" style="left:1259.500px;top:46px;width:21px;height:68px;background:#faf9f6;border:1px solid #c5c2b6;border-right:0;border-radius:3px 0 0 3px;box-sizing:border-box"></div>
<span class="t" style="left: 1237px; top: 73px; width: 64px; text-align: center; transform: rotate(90deg); font-size: 11.5px; letter-spacing: -0.33px;">Обработка</span>
<!-- right panel body -->
<div class="a" id="rbody">
<!-- box1 title -->
<div class="bx" style="top:3px;height:37px">
<svg style="left:5px;top:4px" width="34" height="32" viewBox="0 0 34 32"><path d="M2.200 8.300L24.500 1.500Q25.500 1.300 26 2.200L32.600 19Q32.900 20 32 20.500L11.300 28.500Q10.300 28.800 9.700 28L1.700 9.500Q1.400 8.600 2.200 8.300Z" fill="#d6b8a0"></path><path d="M1.700 9.500L9.700 28Q10.300 28.800 11.300 28.500L32 20.500Q32.900 20 32.600 19L32.800 20.800Q32.900 21.800 32 22.200L11.400 30.200Q10.300 30.500 9.700 29.600L1.800 11.200Z" fill="#a08068"></path><path d="M7.100 9.200L22.800 4.300L27.600 17.300L13 22.400Z" fill="#9c7c64"></path><path d="M8.600 10L22 5.800L26.300 17L13.800 21.300Z" fill="#b89880"></path><path d="M10.300 11.300L21.400 7.900L24.400 16.200L14.100 20Z" fill="#dcc0a8"></path><path d="M10.300 11.300L14.100 20L24.400 16.200" stroke="#8a6a54" stroke-width=".9" fill="none"></path></svg>
<span class="t b" style="left: 50px; top: 13px; font-size: 11.5px; letter-spacing: -0.17px;">Фрезеровка по контуру</span>
</div>
<!-- box2 depth -->
<div class="bx" style="top:45px;height:83px">
<span class="t b" style="left: 6.5px; top: 2px; font-size: 11.5px; letter-spacing: -0.27px;">Глубина прохода</span>
<svg style="left:7px;top:25px" width="38" height="23" viewBox="0 0 38 23"><path d="M10.500 22.700V.500H15V8.500H21.800V16.500H30V8.500H38V22.700Z" fill="#ababab"></path><path d="M11 10L15 6M11 15L15 11M11 20L21 10M14 22.500L22 14.500M19 22.500L25.500 16M24 22.500L30 16.500M29 22.500L37.500 14M34 22.500L37.500 19M31 15L37 9" stroke="#8c8c8c" stroke-width=".7"></path><path d="M10.500 1.200H15V8.500H21.800V16.500H30V8.500H38" fill="none" stroke="#141414" stroke-width="1.400"></path><path d="M2 .500H10M2 8.500H10M2 16.500H10" stroke="#222" stroke-width="1" stroke-dasharray="1 1" fill="none"></path><text font-family="Liberation Sans,sans-serif" font-weight="bold" font-size="6" fill="#111"><tspan x="0" y="6.500">D</tspan><tspan x="0" y="15.300">C</tspan></text></svg>
<span class="t" style="left: 52.5px; top: 21px; font-size: 11px; letter-spacing: -0.13px;">Начальная (D)</span>
<div class="in" style="left:146.500px;top:16px;width:53px;height:19.500px"><span style="background: rgb(59, 95, 159); color: rgb(255, 255, 255); padding: 0px 1px 0px 0px; left: 4.5px; top: 4px; height: 13px; line-height: 13px; letter-spacing: 0.11px;">0.0</span></div>
<span class="t" style="left: 205.5px; top: 18.5px; font-size: 10px; letter-spacing: -1.05px;">мм</span>
<span class="t" style="left: 52.5px; top: 42px; font-size: 11px; letter-spacing: -0.11px;">Конечная (C)</span>
<div class="in" style="left:146.500px;top:39px;width:53px;height:19.500px"><span style="letter-spacing: -0.09px; top: 3px;">2.0</span></div>
<span class="t" style="left: 205.5px; top: 39.5px; font-size: 10px; letter-spacing: -1.05px;">мм</span>
<div class="cb" style="left:7px;top:63.500px"><svg style="left:1px;top:1px" width="9" height="9"><path d="M1 4.500L3.500 7.500L8.200 1.200" stroke="#7d7d78" stroke-width="1.700" fill="none"></path></svg></div>
<span class="t b" style="left: 23.5px; top: 63px; font-size: 11.5px; letter-spacing: -0.18px;">Дополнительные настройки</span>
</div>
<!-- box3 tool -->
<div class="bx" style="top:135px;height:80px">
<div class="a" style="left:9px;top:6px;width:5.500px;height:16.500px;background:linear-gradient(90deg,#9a8448,#e8d68c 45%,#c9b468 70%,#8a7438);border-radius:1px"></div>
<span class="t b" style="left: 21.5px; top: 6px; font-size: 11.5px; letter-spacing: -0.03px;">Инструмент:</span>
<span class="t" style="left: 103.5px; top: 7px; font-size: 11px; letter-spacing: -0.21px;">Кукуруза (1.5 mm) гетинакс</span>
<div class="btn" style="left:74.500px;top:25.500px;width:64px;height:17.500px"></div>
<span class="t" style="left: 78px; top: 28px; font-size: 11px; letter-spacing: 0.2px;">Выбрать...</span>
<div class="btn" style="left:140px;top:25.500px;width:101.500px;height:17.500px"></div>
<span class="t" style="left: 144.5px; top: 28px; font-size: 11px; letter-spacing: 0.17px;">Редактировать...</span>
<div class="a" style="left:7px;top:47.500px;width:239px;height:1px;background:#c9c9c9"></div>
<span class="t b" style="left: 6.5px; top: 57.5px; font-size: 11.5px; letter-spacing: -0.13px;">Проходов:</span>
<span class="t" style="left: 73.5px; top: 58.5px; font-size: 11px;">2</span>
<div class="btn" style="left:100px;top:56.500px;width:140px;height:17px"></div>
<span class="t" style="left: 137.5px; top: 58.5px; font-size: 11px; letter-spacing: -0.07px;">Изменить ...</span>
</div>
<!-- box4 trajectory -->
<div class="bx" style="top:224px;height:122px">
<span class="t b" style="left: 7px; top: 1.5px; font-size: 11.5px; letter-spacing: -0.15px;">Траектория</span>
<div class="rd on" style="left:7.500px;top:23px"></div>
<span class="t b" style="left: 23px; top: 21.5px; font-size: 11.5px; letter-spacing: -0.06px;">Снаружи/Справа</span>
<div class="rd" style="left:7.500px;top:41px"></div>
<span class="t b" style="left: 23px; top: 39.5px; font-size: 11.5px; letter-spacing: -0.08px;">Внутри/Слева</span>
<div class="rd" style="left:7.500px;top:59px"></div>
<span class="t b" style="left: 23px; top: 57.5px; font-size: 11.5px; letter-spacing: -0.16px;">По контуру</span>
<svg style="left:130px;top:4px" width="66" height="62" viewBox="1112 295 66 62">
<rect x="1127" y="310" width="45.500" height="45.500" fill="#d9d9d9" opacity=".7"></rect>
<rect x="1125.700" y="308.500" width="45" height="45" fill="#fff" stroke="#222" stroke-width="1.100"></rect>
<g stroke-width=".8"><circle cx="1129.500" cy="302.500" r="5.200" fill="#f3f6e6" stroke="#dfe3cc"></circle><circle cx="1135.500" cy="302.500" r="5.200" fill="#f2f3d6" stroke="#cdd0a8"></circle><circle cx="1142" cy="302.500" r="5.200" fill="#f1efbe" stroke="#b9b57c"></circle></g>
<circle cx="1148.800" cy="302.500" r="5.300" fill="#ece482" stroke="#55522e" stroke-width="1"></circle>
<path d="M1143.500 302.300H1124.500Q1118.500 302.300 1118.500 308.500V328" stroke="#c42424" stroke-width="1" fill="none"></path>
<circle cx="1118.500" cy="330.500" r="1.800" fill="none" stroke="#000" stroke-width=".9"></circle><path d="M1115.500 330.500H1121.500M1118.500 327.500V333.500" stroke="#000" stroke-width=".9"></path>
</svg>
<span class="t b" style="left: 24.5px; top: 79.5px; font-size: 11.5px; letter-spacing: -0.03px;">Подача</span>
<div class="rd on" style="left:82px;top:81px"></div>
<span class="t" style="left: 97.5px; top: 80.5px; font-size: 11px; letter-spacing: -0.14px;">Попутная</span>
<div class="rd" style="left:154px;top:80px"></div>
<span class="t" style="left: 169.5px; top: 80px; font-size: 11px; letter-spacing: -0.2px;">Встречная</span>
<span class="t" style="left: 48.5px; top: 99.5px; font-size: 11px; letter-spacing: -0.39px;">Смещение</span>
<div class="in" style="left:112px;top:97px;width:54px;height:19px"><span style="letter-spacing: -0.09px; top: 1.5px;">0.0</span></div>
<span class="t" style="left: 171.5px; top: 102px; font-size: 10px; letter-spacing: -1.05px;">мм</span>
</div>
<!-- box5 allowance -->
<div class="bx" style="top:355px;height:73px">
<div class="cb" style="left:5.500px;top:6px"></div>
<span class="t b" style="left: 20.5px; top: 5px; font-size: 11.5px; letter-spacing: -0.14px;">Сделать припуск</span>
<svg style="left:10px;top:28px" width="44" height="36" viewBox="992 450 44 36">
<rect x="994.700" y="470.700" width="15.600" height="12.600" fill="#9a9a9a"></rect><path d="M995 480L1004 471M995 475L999 471M999 483L1010 472M1004 483L1010 477" stroke="#6f6f6f" stroke-width=".7"></path><path d="M994.500 470.700H1010.500V483.400" stroke="#000" stroke-width="1.300" fill="none"></path>
<path d="M1010.500 470V460M1018.500 470V460" stroke="#111" stroke-width="1" stroke-dasharray="1 1"></path>
<path d="M1018 471.300H1033M1021 477.300H1033M1010.500 483.400H1033" stroke="#1818b8" stroke-width="1.400"></path>
<text x="1011" y="458.500" font-family="Liberation Sans,sans-serif" font-weight="bold" font-size="9" fill="#000">A</text>
</svg>
<span class="t g" style="left: 63.5px; top: 29px; font-size: 11px; letter-spacing: -0.24px;">Размер (A)</span>
<div class="in dis" style="left:143px;top:24px;width:60px;height:22px"><span style="top: 2px; letter-spacing: -0.09px;">0.0</span></div>
<span class="t g" style="left: 211.5px; top: 29px; font-size: 10px; letter-spacing: -1.05px;">мм</span>
<div class="cb dis" style="left:62px;top:50px"></div>
<span class="t g" style="left: 78px; top: 50.5px; font-size: 11px; letter-spacing: -0.22px;">Обратное направление</span>
</div>
<!-- box6 tabs/bridges -->
<div class="bx" style="top:437px;height:116px">
<div class="cb" style="left:5.500px;top:7px"></div>
<span class="t b" style="left: 20.5px; top: 6px; font-size: 11.5px; letter-spacing: -0.14px;">Добавить мостики</span>
<svg style="left:18px;top:28px" width="46" height="80" viewBox="1000 532 46 80">
<defs><linearGradient id="gWd" x1="0" y1="0" x2="0" y2="1"><stop offset="0" stop-color="#fbf0b8"></stop><stop offset="1" stop-color="#ecd98a"></stop></linearGradient><filter id="fsh" x="-10%" y="-10%" width="130%" height="140%"><feDropShadow dx="1.200" dy="1.500" stdDeviation="1" flood-color="#6b5a20" flood-opacity=".5"></feDropShadow></filter></defs>
<g filter="url(#fsh)"><path d="M1002.500 539.500H1038V546H1030Q1027.500 550 1030 554.500H1038.500V561Q1030 564.500 1020 562.500Q1010 564 1002.500 560V554.500H1011Q1013.500 550 1011 546H1002.500Z" fill="url(#gWd)"></path>
<rect x="1002.500" y="569.500" width="33" height="11.500" fill="url(#gWd)"></rect>
<rect x="1002.500" y="595.500" width="34" height="11.500" fill="url(#gWd)"></rect></g>
<path d="M1002.500 546H1011M1030 546H1038M1002.500 554.500H1011M1030 554.500H1038" stroke="#3a3420" stroke-width="1"></path>
<path d="M1012.500 535V549M1028.500 535V549" stroke="#000" stroke-width="1" stroke-dasharray="1.500 1.200"></path>
<rect x="1012" y="573.500" width="16.500" height="6" fill="#ae8a52"></rect><path d="M1030 574.500H1041M1030 579.500H1041" stroke="#111" stroke-width="1.200" stroke-dasharray="2 1"></path><path d="M1002.500 569.500H1035.500" stroke="#4a4228" stroke-width=".8"></path>
<path d="M1008.500 607L1019.500 600L1030 607Z" fill="#ae8a52"></path><path d="M1002.500 595.500H1036.500" stroke="#4a4228" stroke-width=".8"></path>
</svg>
<span class="t g" style="left: 100.5px; top: 35px; font-size: 11px; letter-spacing: -0.45px;">Длина</span>
<div class="in dis" style="left:139.500px;top:32px;width:40px;height:19px"><span style="letter-spacing: -0.09px; top: 1.5px;">1.0</span></div>
<span class="t g" style="left: 185px; top: 35px; font-size: 10px; letter-spacing: -1.05px;">мм</span>
<span class="t g" style="left: 86px; top: 65.5px; font-size: 11px; letter-spacing: -0.34px;">Толщина</span>
<div class="in dis" style="left:139.500px;top:63px;width:40px;height:19px"><span style="letter-spacing: -0.09px; top: 1px;">2.0</span></div>
<span class="t g" style="left: 185px; top: 65.5px; font-size: 10px; letter-spacing: -1.05px;">мм</span>
<div class="cb dis" style="left:74px;top:93px"></div>
<span class="t g" style="left: 90.5px; top: 93.5px; font-size: 11px; letter-spacing: -0.49px;">3D мостики</span>
<div class="btn dis" style="left:155px;top:90.500px;width:89.500px;height:20px;border-radius:6px;border-color:#bdbcb6;background:#efeeea"></div>
<span class="t g" style="left: 159.5px; top: 93.5px; font-size: 11px; letter-spacing: -0.04px;">Редактировать</span>
</div>
<!-- box7 tab control -->
<div class="a" style="left:4px;top:560px;width:249px;height:20px;background:#f1efe6"></div>
<div class="a" style="left:50px;top:562px;width:48px;height:18px;background:linear-gradient(#fdfdfb,#f0eee6);border:1px solid #b9b6a8;border-bottom:0;border-radius:3px 3px 0 0;box-sizing:border-box;box-shadow:inset 1px 1px 0 #fff"></div>
<div class="a" style="left:99.500px;top:562px;width:54.500px;height:18px;background:linear-gradient(#fdfdfb,#f0eee6);border:1px solid #b9b6a8;border-bottom:0;border-radius:3px 3px 0 0;box-sizing:border-box;box-shadow:inset 1px 1px 0 #fff"></div>
<div class="a" style="left:155.500px;top:562px;width:55px;height:18px;background:linear-gradient(#fdfdfb,#f0eee6);border:1px solid #b9b6a8;border-bottom:0;border-radius:3px 3px 0 0;box-sizing:border-box;box-shadow:inset 1px 1px 0 #fff"></div>
<div class="a" style="left:212px;top:562px;width:12px;height:18px;background:linear-gradient(#fdfdfb,#f0eee6);border:1px solid #b9b6a8;border-bottom:0;border-right:0;border-radius:3px 0 0 0;box-sizing:border-box"></div>
<div class="a" style="left:4px;top:579px;width:249px;height:189px;background:#fcfcfa;box-sizing:border-box;border:1px solid #fff;border-right-color:#8d897a;border-bottom-color:#8d897a;box-shadow:inset -1px -1px 0 #d9d6c8,inset -2px -2px 0 #fff,inset -3px -3px 0 #aaa698"></div>
<div class="a" style="left:4px;top:560px;width:46px;height:20px;background:#fcfcfa;border:1px solid #b9b6a8;border-bottom:0;border-left-color:#fff;border-radius:3px 3px 0 0;box-sizing:border-box"></div>
<span class="t b" style="left: 8px; top: 563px; font-size: 11.5px; letter-spacing: -0.1px;">Заход</span>
<span class="t" style="left: 53px; top: 564px; font-size: 11px;">Подвод</span>
<span class="t" style="left: 104.5px; top: 564px; font-size: 11px; letter-spacing: -0.17px;">Порядок</span>
<span class="t" style="left: 160.5px; top: 564px; font-size: 11px; letter-spacing: -0.15px;">Начать с</span>
<div class="a" style="left:221px;top:561px;width:16px;height:15px;background:linear-gradient(#fff,#ebe9e0);border:1px solid #a7a498;box-sizing:border-box;border-radius:2px"></div>
<div class="a" style="left:237px;top:561px;width:16px;height:15px;background:linear-gradient(#fff,#ebe9e0);border:1px solid #a7a498;box-sizing:border-box;border-radius:2px"></div>
<svg style="left:221px;top:561px" width="33" height="15"><path d="M9.500 4.500V10.500L6.300 7.500ZM23 4.500V10.500L26.200 7.500Z" fill="#000"></path></svg>
<div class="cb" style="left:10px;top:585.500px"></div>
<span class="t b" style="left: 25.5px; top: 584.5px; font-size: 11.5px; letter-spacing: 0.02px;">Использовать заход</span>
<span class="t gb" style="left: 9.5px; top: 605px; font-size: 11.5px; letter-spacing: -0.8px;">Вид</span>
<svg style="left:48px;top:610px" width="60" height="34" viewBox="1026 677 60 34">
<ellipse cx="1055.800" cy="696" rx="24.600" ry="11.500" fill="none" stroke="#cfcfcf" stroke-width="1.600"></ellipse>
<ellipse cx="1054.800" cy="694.800" rx="24.600" ry="11.500" fill="none" stroke="#151515" stroke-width="1.100"></ellipse>
<rect x="1054.300" y="681" width="3.600" height="12.500" fill="#d8bc78" stroke="#a88c48" stroke-width=".5"></rect>
<path d="M1056.200 693.500V705" stroke="#c02020" stroke-width="1"></path>
<circle cx="1056.300" cy="706.500" r="1.900" fill="none" stroke="#000" stroke-width="1"></circle><path d="M1053.300 706.500H1059.300M1056.300 703.500V709.500" stroke="#000" stroke-width="1"></path>
</svg>
<div class="rd dis" style="left:114px;top:606.500px"></div>
<span class="t g" style="left: 130px; top: 606.5px; font-size: 11px; letter-spacing: -0.31px;">Плавно</span>
<div class="rd dis" style="left:114px;top:622.500px"></div>
<span class="t g" style="left: 130px; top: 623px; font-size: 11px; letter-spacing: -0.45px;">Зигзаг</span>
<div class="rd dis on" style="left:114px;top:640.500px"></div>
<span class="t g" style="left: 130px; top: 641px; font-size: 11px; letter-spacing: -0.28px;">Спираль</span>
<span class="t gb" style="left: 9.5px; top: 653.5px; font-size: 11.5px; letter-spacing: -0.33px;">Параметры ...</span>
<div class="cb dis" style="left:37.500px;top:673.500px"></div>
<span class="t gb" style="left: 53px; top: 673px; font-size: 11.5px; letter-spacing: 0.1px;">Основа - Подвод/Отвод</span>
<div class="rd dis on" style="left:43px;top:694.500px"></div>
<span class="t g" style="left: 59.5px; top: 695px; font-size: 11px; letter-spacing: -0.42px;">Дистанция</span>
<div class="in dis" style="left:120px;top:691px;width:41px;height:19.500px"><span style="letter-spacing: -0.09px; top: 2px;">2.0</span></div>
<span class="t g" style="left: 162.5px; top: 695.5px; font-size: 10px; letter-spacing: -1.05px;">мм</span>
<div class="rd dis" style="left:43px;top:721px"></div>
<span class="t g" style="left: 59px; top: 721px; font-size: 11px; letter-spacing: -0.04px;">Угол</span>
<div class="in dis" style="left:120px;top:716.500px;width:41px;height:19.500px"><span style="top: 2.5px;">20.0</span></div>
<span class="t g" style="left: 162.5px; top: 721px; letter-spacing: -0.12px;">град.</span>
<span class="t g" style="left: 60px; top: 743px; font-size: 11px; letter-spacing: -0.36px;">Дистанция</span>
<div class="in dis" style="left:120px;top:738.500px;width:41px;height:19.500px"><span style="letter-spacing: 0.04px; top: 2.5px;">100.0</span></div>
<span class="t g" style="left: 162.5px; top: 743px; font-size: 10px; letter-spacing: -1.05px;">мм</span>
<!-- box8 summary -->
<div class="bx" style="top:779px;height:40px;border-radius:3px 3px 0 0">
<span class="t" style="left: 7.5px; top: 6px; font-size: 11px; letter-spacing: -0.36px;">Безопасная Z</span>
<span class="t" style="left: 88.5px; top: 6px; font-size: 11px; letter-spacing: -0.6px;">5.0 мм</span>
<span class="t" style="left: 7.5px; top: 22px; font-size: 11px; letter-spacing: -0.16px;">Парковка</span>
<span class="t" style="left: 88.5px; top: 22px; font-size: 11px;">X:0.00 Y:0.00 Z:20.00</span>
</div>
</div>
<!-- right panel scrollbar -->
<div class="a" style="left:1244px;top:67px;width:14px;height:815px;background:#f6f5f1"></div>
<div class="a" style="left:1244px;top:68px;width:13px;height:15px;background:linear-gradient(90deg,#f8f7f3,#e3e0d6);box-shadow:0 0 0 .5px #d0cdc2"></div>
<svg style="left:1247px;top:73px" width="8" height="6"><path d="M.8 4.500L3.700 1.500L6.600 4.500" stroke="#333" stroke-width="1.400" fill="none"></path></svg>
<div class="a" style="left:1244px;top:84px;width:13px;height:677px;background:linear-gradient(90deg,#fafaf7,#ecebe4 45%,#dbd9ce);box-shadow:0 0 0 .5px #cfccc0"></div>
<svg style="left:1245px;top:417px" width="11" height="10"><path d="M1 1.500H10M1 3.500H10M1 5.500H10M1 7.500H10" stroke="#a09e94" stroke-width="1"></path></svg>
<div class="a" style="left:1244px;top:867px;width:13px;height:14px;background:linear-gradient(90deg,#f8f7f3,#e3e0d6);box-shadow:0 0 0 .5px #d0cdc2"></div>
<svg style="left:1247px;top:872px" width="8" height="6"><path d="M.8 1.200L3.700 4.200L6.600 1.200" stroke="#333" stroke-width="1.400" fill="none"></path></svg>
<!-- status bar overlay + taskbar -->
<div class="a" id="task">
<svg style="left:23px;top:3px" width="20" height="18" viewBox="0 0 20 18"><g fill="none" stroke="#d4ddec" stroke-width="1.300" opacity=".8"><path d="M3 3.500Q6 2 9 3.500L8 8.500Q5 7 2 8.500Z"></path><path d="M11 4Q14 5.500 17.500 4L16.500 9Q13.500 10.500 10 9Z"></path><path d="M1.700 10.500Q4.700 9 7.700 10.500L6.700 15.500Q3.700 14 .7 15.500Z"></path><path d="M9.700 11Q12.700 12.500 16 11L15 16Q12 17.500 8.700 16Z"></path></g></svg>
<div class="a" style="left:65px;top:2.500px;width:153.500px;height:19.500px;border-radius:5px;background:linear-gradient(#4b6291,#566d9c 60%,#6078a6);box-shadow:inset 0 1px 2px rgba(20,30,60,.55),0 0 0 1px rgba(150,170,205,.55)"></div>
<svg style="left:77px;top:5px" width="10" height="15" viewBox="0 0 12 16"><path d="M8.500 .5C6 3 3.500 6.500 2.500 10.500L1.200 15.500L2.600 15.500L3.600 12C6 10 8 6 8.500 .5Z" fill="#cc2a40"></path></svg>
<span class="t" style="left: 92px; top: 5px; color: rgb(255, 255, 255); font-size: 11.5px; letter-spacing: -0.17px;">Aspire 9.007 {Jogyba...</span>
<div class="a" style="left:1139px;top:5px;width:16px;height:15px;background:#49628f"></div>
<span class="t" style="left: 1140px; top: 5.5px; color: rgb(255, 255, 255); letter-spacing: -0.1px;">EN</span>
<div class="a" style="left:1168.500px;top:2.500px;width:108px;height:20px;border-radius:5px;background:linear-gradient(#60779f,#6d85b0);box-shadow:inset 0 0 0 1px #3f5482,0 0 0 1px rgba(165,182,212,.7)"></div>
<div class="a" style="left:1175px;top:4px;width:15px;height:16px;background:linear-gradient(#f7a04a,#e8741c);border:1px solid #fbd1a0;box-sizing:border-box"></div>
<svg style="left:1175px;top:4px" width="60" height="17" viewBox="0 0 60 17"><path d="M4.500 11.500L10.500 11.500M3.500 14H12M7.500 3L10.500 5.500L6 9.500L11 9" stroke="#fff" stroke-width="1.400" fill="none"></path>
<circle cx="25" cy="7.500" r="5.300" fill="#5a5f6a" stroke="#c9ccd4" stroke-width="1.200"></circle><circle cx="26" cy="6.500" r="2.500" fill="#a9adb6"></circle><path d="M20 13L31 14.500" stroke="#9098c8" stroke-width="1"></path>
<path d="M38 5L43.500 2.500L49 5V11L43.500 14L38 11Z" fill="#e9edf6" stroke="#2a3a5c" stroke-width="1"></path><path d="M38 5L43.500 7.500L49 5M43.500 7.500V14" stroke="#2a3a5c" stroke-width="1" fill="none"></path><path d="M47.500 9.500L48.800 12.200L51.700 12.500L49.500 14.400L50.200 17L47.500 15.600L45 17L45.600 14.400L43.500 12.500L46.300 12.200Z" fill="#f2c01a" stroke="#a07808" stroke-width=".4"></path></svg>
<span class="t b" style="left: 1235px; top: 5px; color: rgb(255, 255, 255); font-size: 11px; letter-spacing: -0.11px;">10:56</span>
</div>

</div>

</body></html>
